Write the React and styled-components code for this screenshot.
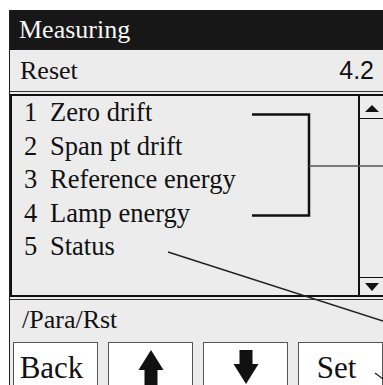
import React from "react";
import styled, { createGlobalStyle } from "styled-components";

const GlobalStyle = createGlobalStyle`
  html, body {
    margin: 0;
    padding: 0;
    background: #ffffff;
    overflow: hidden;
  }
`;

const Page = styled.div`
  position: relative;
  box-sizing: border-box;
  width: 383px;
  height: 385px;
  padding: 10px 0 0 9px;
  overflow: hidden;
  font-family: "Liberation Serif", "Times New Roman", serif;
  color: #111;
`;

const Screen = styled.div`
  width: 374px;
  height: 400px;
  border-left: 1px solid #222;
  background: #ececec;
  display: flex;
  flex-direction: column;
`;

const TitleBar = styled.div`
  height: 40px;
  background: #171717;
  color: #f7f7f7;
  font-size: 26px;
  display: flex;
  align-items: center;
  padding-left: 9px;
`;

const InfoRow = styled.div`
  height: 41px;
  border-bottom: 1px solid #333;
  display: flex;
  align-items: center;
  justify-content: space-between;
  padding: 0 10px 0 10px;
  font-size: 26px;
`;

const Version = styled.span`
  font-family: "Liberation Sans", Arial, sans-serif;
  font-size: 25px;
`;

const ListBox = styled.div`
  box-sizing: border-box;
  height: 203px;
  margin: 2px 0;
  border: 2px solid #111;
  border-right: none;
  display: flex;
`;

const Items = styled.ol`
  flex: 1;
  margin: 0;
  padding: 0 0 0 12px;
  list-style: none;
`;

const Item = styled.li`
  display: flex;
  height: 33.5px;
  line-height: 33.5px;
  font-size: 26.5px;
`;

const Num = styled.span`
  width: 26px;
`;

const ScrollBar = styled.div`
  width: 24px;
  border-left: 2px solid #111;
  display: flex;
  flex-direction: column;
`;

const ScrollButton = styled.div`
  display: flex;
  justify-content: center;
  align-items: ${(p) => (p.$down ? "center" : "flex-start")};
  height: ${(p) => (p.$down ? "17px" : "13px")};
  padding-top: ${(p) => (p.$down ? "0" : "9px")};
  margin-top: ${(p) => (p.$down ? "auto" : "0")};
  border-top: ${(p) => (p.$down ? "1px solid #111" : "none")};
  border-bottom: ${(p) => (p.$down ? "none" : "1px solid #111")};
`;

const Triangle = styled.span`
  width: 0;
  height: 0;
  border-left: 7.5px solid transparent;
  border-right: 7.5px solid transparent;
  ${(p) =>
    p.$down
      ? "border-top: 8px solid #111;"
      : "border-bottom: 7px solid #111;"}
`;

const Footer = styled.div`
  flex: 1;
  border-top: 1px solid #333;
  padding: 5px 0 0 3px;
`;

const PathLabel = styled.div`
  font-size: 26px;
  line-height: 30px;
  padding-left: 9px;
`;

const KeyRow = styled.div`
  display: flex;
  gap: 10px;
  margin-top: 7px;
`;

const Key = styled.div`
  box-sizing: border-box;
  width: 85px;
  height: 52px;
  flex-shrink: 0;
  border: 1px solid #555;
  background: #ffffff;
  display: flex;
  justify-content: center;
  align-items: flex-start;
  font-size: 31px;
  line-height: 31px;
  padding-top: ${(p) => (p.$icon ? "7px" : "9px")};
  padding-right: ${(p) => (p.$icon ? "0" : "8px")};
`;

const Overlay = styled.svg`
  position: absolute;
  left: 0;
  top: 0;
  pointer-events: none;
`;

const ArrowUp = () => (
  <svg width="26" height="36" viewBox="0 0 26 36">
    <polygon points="13,0 25.5,20 0.5,20" fill="#111" />
    <rect x="6.5" y="19" width="13" height="17" fill="#111" />
  </svg>
);

const ArrowDown = () => (
  <svg width="26" height="36" viewBox="0 0 26 36">
    <rect x="6.5" y="0" width="13" height="15" fill="#111" />
    <polygon points="0.5,14 25.5,14 13,34" fill="#111" />
  </svg>
);

const items = ["Zero drift", "Span pt drift", "Reference energy", "Lamp energy", "Status"];

export default function App() {
  return (
    <Page>
      <GlobalStyle />
      <Screen>
        <TitleBar>Measuring</TitleBar>
        <InfoRow>
          <span>Reset</span>
          <Version>4.2</Version>
        </InfoRow>
        <ListBox>
          <Items>
            {items.map((label, i) => (
              <Item key={label}>
                <Num>{i + 1}</Num>
                <span>{label}</span>
              </Item>
            ))}
          </Items>
          <ScrollBar>
            <ScrollButton>
              <Triangle />
            </ScrollButton>
            <ScrollButton $down>
              <Triangle $down />
            </ScrollButton>
          </ScrollBar>
        </ListBox>
        <Footer>
          <PathLabel>/Para/Rst</PathLabel>
          <KeyRow>
            <Key>Back</Key>
            <Key $icon>
              <ArrowUp />
            </Key>
            <Key $icon>
              <ArrowDown />
            </Key>
            <Key>Set</Key>
          </KeyRow>
        </Footer>
      </Screen>
      <Overlay width="383" height="385" viewBox="0 0 383 385">
        <polyline
          points="252,114.5 309,114.5 309,215.5 252,215.5"
          fill="none"
          stroke="#111"
          strokeWidth="2.5"
        />
        <line x1="309" y1="166" x2="383" y2="166" stroke="#555" strokeWidth="1.3" />
        <line x1="168" y1="252" x2="383" y2="321" stroke="#222" strokeWidth="1.5" />
        <line x1="375" y1="373" x2="383" y2="379" stroke="#222" strokeWidth="1.3" />
      </Overlay>
    </Page>
  );
}
